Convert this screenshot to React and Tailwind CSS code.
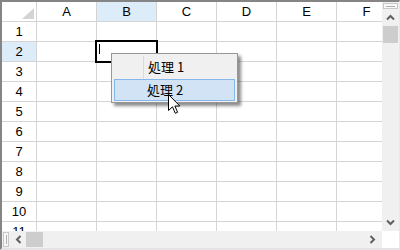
import React from 'react';

const cols = ['A', 'B', 'C', 'D', 'E', 'F'];
const rows = [1, 2, 3, 4, 5, 6, 7, 8, 9, 10, 11];

const Chevron = ({ dir }) => {
  const rot = { up: 0, down: 180, left: 270, right: 90 }[dir];
  return (
    <svg width="9" height="9" viewBox="0 0 9 9" style={{ transform: `rotate(${rot}deg)` }}>
      <path d="M1 6.5 L4.5 3 L8 6.5" fill="none" stroke="#606060" strokeWidth="2" />
    </svg>
  );
};

const App = () => {
  return (
    <div className="relative w-[400px] h-[250px] bg-white overflow-hidden border-t-2 border-l-2 border-[#858585] border-r border-b-2 border-r-[#e8e8e8] border-b-[#e3e3e3]" style={{ fontFamily: '"Liberation Sans", "Noto Sans CJK JP", sans-serif' }}>
      <div className="flex h-[229px]">
        {/* grid */}
        <div className="w-[380px] overflow-hidden">
          <div className="flex h-[20px] border-b border-[#d4d4d4]">
            <div className="w-[35px] shrink-0 border-r border-[#d4d4d4] flex items-end justify-end pr-[2px] pb-[2px]">
              <svg width="12" height="11" viewBox="0 0 12 11">
                <polygon points="12,0 12,11 0,11" fill="#d4d4d4" />
              </svg>
            </div>
            {cols.map((c) => (
              <div
                key={c}
                className={`w-[60px] shrink-0 border-r border-[#d4d4d4] flex items-center justify-center text-[13px] text-black ${c === 'B' ? 'bg-[#dcecf8]' : ''}`}
              >
                {c}
              </div>
            ))}
          </div>
          {rows.map((r) => (
            <div key={r} className="flex h-[20px] border-b border-[#d4d4d4]">
              <div className={`w-[35px] shrink-0 border-r border-[#d4d4d4] flex items-center justify-center text-[13px] text-black ${r === 2 ? 'bg-[#dcecf8]' : ''}`}>
                {r}
              </div>
              {cols.map((c) => (
                <div key={c} className="w-[60px] shrink-0 border-r border-[#d4d4d4]" />
              ))}
            </div>
          ))}
        </div>
        {/* vertical scrollbar */}
        <div className="w-[17px] bg-[#f0f0f0] flex flex-col items-center">
          <div className="w-[15px] h-[6px] mt-[1px] border border-[#c8c8c8] bg-[#f7f7f7] flex items-center justify-center">
            <div className="w-[9px] h-px bg-[#b0b0b0]" />
          </div>
          <div className="h-[15px] flex items-center justify-center mt-[1px]">
            <Chevron dir="up" />
          </div>
          <div className="w-[15px] h-[17px] bg-[#cdcdcd] mt-[1px]" />
          <div className="flex-1" />
          <div className="h-[15px] flex items-center justify-center mb-[1px]">
            <Chevron dir="down" />
          </div>
        </div>
      </div>
      {/* horizontal scrollbar */}
      <div className="flex h-[17px]">
        <div className="w-[380px] bg-[#f0f0f0] flex items-center">
          <div className="w-[6px] h-[15px] ml-[1px] border border-[#c8c8c8] bg-[#f7f7f7] flex items-center justify-center">
            <div className="w-px h-[9px] bg-[#b0b0b0]" />
          </div>
          <div className="w-[15px] flex items-center justify-center ml-[2px]">
            <Chevron dir="left" />
          </div>
          <div className="w-[17px] h-[15px] bg-[#cdcdcd]" />
          <div className="flex-1" />
          <div className="w-[15px] flex items-center justify-center mr-[2px]">
            <Chevron dir="right" />
          </div>
        </div>
        <div className="w-[17px] bg-white" />
      </div>

      {/* selected cell */}
      <div className="absolute left-[93px] top-[38px] w-[63px] h-[23px] border-2 border-black">
        <div className="absolute left-[2px] top-[2px] w-px h-[10px] bg-black" />
      </div>

      {/* context menu */}
      <div className="absolute left-[109px] top-[51px] w-[127px] h-[50px] bg-[#f0f0f0] border border-[#979797] p-[2px] shadow-[3px_3px_3px_rgba(0,0,0,0.45)]">
        <div className="absolute left-[31px] top-[2px] bottom-[2px] w-px bg-[#dadada]" />
        <div className="relative h-[22px] flex items-center pl-[34px] text-[13px] text-black" style={{ fontFamily: '"Noto Sans CJK JP", sans-serif' }}>
          処理 1
        </div>
        <div className="relative h-[22px] mt-px flex items-center pl-[32px] text-[13px] text-black bg-[#d1e3f5] border border-[#86b7ea]" style={{ fontFamily: '"Noto Sans CJK JP", sans-serif' }}>
          処理 2
        </div>
      </div>

      {/* mouse pointer */}
      <svg className="absolute left-[166px] top-[92px]" width="13" height="21" viewBox="0 0 13 21">
        <path d="M0.5 0.5 L0.5 16.5 L4.5 12.8 L7.3 19.3 L9.6 18.3 L6.9 12 L11.8 12 Z" fill="white" stroke="black" strokeWidth="1" strokeLinejoin="miter" />
      </svg>
    </div>
  );
};

export default App;
